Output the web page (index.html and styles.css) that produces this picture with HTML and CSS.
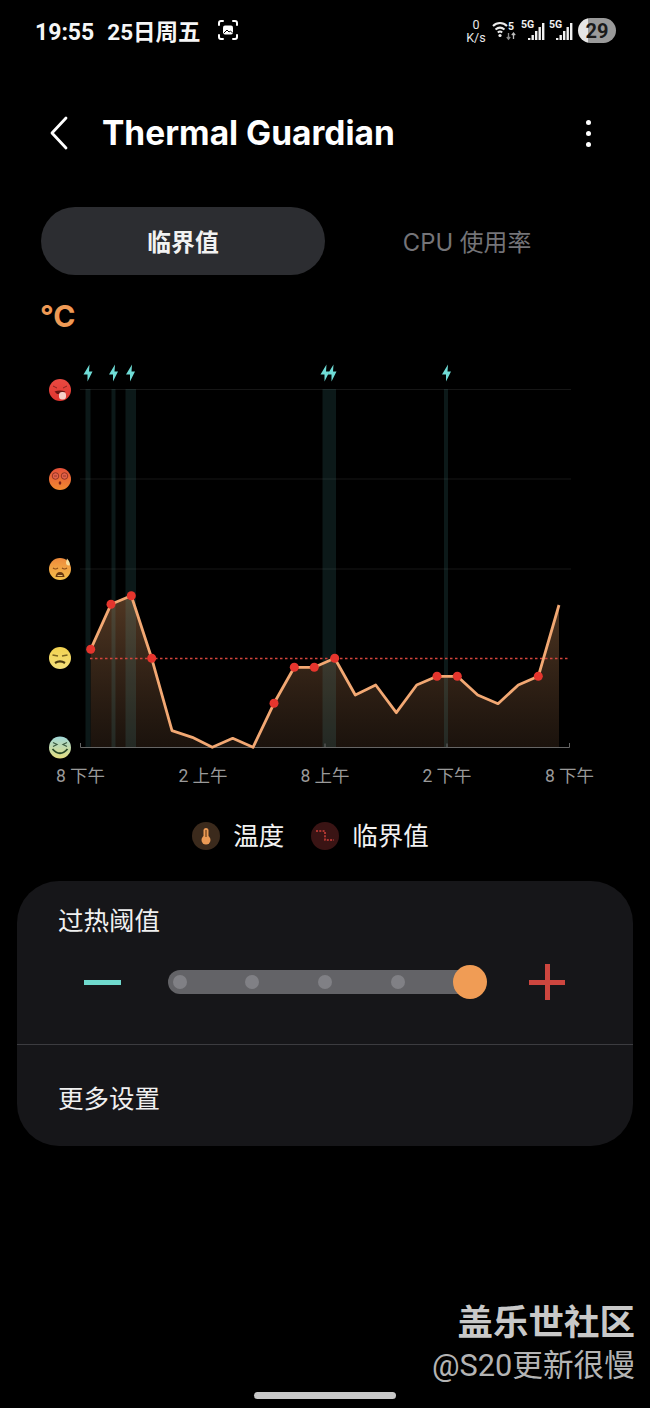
FILE: index.html
```html
<!DOCTYPE html>
<html lang="zh">
<head>
<meta charset="utf-8">
<title>Thermal Guardian</title>
<link rel="stylesheet" href="styles.css">
</head>
<body>
<div class="screen">
  <div class="status">
    <div class="status-left">
      <span class="clock">19:55</span>
      <span class="date">25日周五</span>
      <svg class="shot" viewBox="0 0 22 22" width="22" height="22" fill="none" stroke="#fff" stroke-width="2" stroke-linecap="round" stroke-linejoin="round">
        <path d="M2 6V4Q2 2 4 2H6M16 2H18Q20 2 20 4V6M2 16V18Q2 20 4 20H6M16 20H18Q20 20 20 18V16"/>
        <rect x="6" y="6.500" width="10" height="9" rx="2" fill="#fff" stroke="none"/>
        <path d="M7 14l3-3 2 2 1.500-1 2 2" stroke="#000" stroke-width="1"/>
      </svg>
    </div>
    <div class="status-right">
      <div class="speed"><span>0</span><span>K/s</span></div>
      <svg class="wifi" viewBox="0 0 25 24" width="25" height="24" fill="none" stroke="#ececec" stroke-width="2">
        <path d="M1 7C5 3 11 3 15 7M3.500 10.500C6.500 8 9.500 8 12.500 10.500M5.800 13.500C7 12.500 9 12.500 10.200 13.500"/>
        <circle cx="8" cy="16.500" r="1.600" fill="#ececec" stroke="none"/>
        <text x="16" y="11" class="tiny">5</text>
        <path d="M16.500 14v6M14.800 18l1.700 2.200 1.700-2.200" stroke="#8a8a8a" stroke-width="1.300"/>
        <path d="M21.500 20v-6M19.800 16.200l1.700-2.200 1.700 2.200" stroke="#bdbdbd" stroke-width="1.300"/>
      </svg>
      <svg class="signal" viewBox="0 0 24 24" width="24" height="24">
        <text x="0" y="9" class="tiny">5G</text>
        <g fill="#f0f0f0">
          <rect x="7" y="19" width="2.400" height="2"/><rect x="10.500" y="16" width="2.400" height="5"/><rect x="14" y="12" width="2.400" height="9"/><rect x="17.500" y="8" width="2.400" height="13"/><rect x="21" y="4" width="2.400" height="17"/>
        </g>
      </svg>
      <svg class="signal" viewBox="0 0 24 24" width="24" height="24">
        <text x="0" y="9" class="tiny">5G</text>
        <g fill="#f0f0f0">
          <rect x="7" y="19" width="2.400" height="2"/><rect x="10.500" y="16" width="2.400" height="5"/><rect x="14" y="12" width="2.400" height="9"/><rect x="17.500" y="8" width="2.400" height="13"/><rect x="21" y="4" width="2.400" height="17"/>
        </g>
      </svg>
      <div class="battery"><span>29</span></div>
    </div>
  </div>

  <header class="appbar">
    <svg class="back" viewBox="0 0 20 34" width="20" height="34" fill="none" stroke="#fff" stroke-width="2.800" stroke-linecap="round" stroke-linejoin="round"><path d="M17 2L3 17L17 32"/></svg>
    <h1 class="title">Thermal Guardian</h1>
    <div class="kebab"><i></i><i></i><i></i></div>
  </header>

  <nav class="tabs">
    <div class="tab tab-active">临界值</div>
    <div class="tab">CPU 使用率</div>
  </nav>

  <div class="unit">°C</div>

  <svg class="chart" viewBox="0 355 650 440" width="650" height="440">
    <defs>
      <linearGradient id="area" x1="0" y1="0" x2="0" y2="1">
        <stop offset="0" stop-color="#7d5535" stop-opacity=".65"/>
        <stop offset="1" stop-color="#5a3e2a" stop-opacity=".3"/>
      </linearGradient>
      <linearGradient id="e1" x1="0" y1="0" x2="0" y2="1"><stop offset="0" stop-color="#e94a42"/><stop offset="1" stop-color="#e0352f"/></linearGradient>
      <linearGradient id="e2" x1="0" y1="0" x2="0" y2="1"><stop offset="0" stop-color="#e5503a"/><stop offset="1" stop-color="#f28a30"/></linearGradient>
      <linearGradient id="e3" x1="0" y1="0" x2="0" y2="1"><stop offset="0" stop-color="#ee8a3c"/><stop offset="1" stop-color="#f5c04a"/></linearGradient>
      <linearGradient id="e4" x1="0" y1="0" x2="0" y2="1"><stop offset="0" stop-color="#f2d24f"/><stop offset="1" stop-color="#f3e07c"/></linearGradient>
      <linearGradient id="e5" x1="0" y1="0" x2="0" y2="1"><stop offset="0" stop-color="#a0d8d8"/><stop offset="1" stop-color="#e4de80"/></linearGradient>
      <path id="bolt" d="M1.500 -8.500L-4.500 1.500H-.5V8.500L4.500 -1.500H1Z" fill="#6fdcd6"/>
    </defs>

    <g class="grid">
      <path d="M80 389.500H571M80 479H571M80 569H571"/>
    </g>

    <path class="area" d="M90.700 649.300L111 604.300L131.300 595.700L151.700 658.300L172 730.700L192.300 737.300L212.300 747.300L232.700 738.300L253 747.300L274 703.300L294.300 667.300L314.300 667.300L334.700 658.300L355.300 695L375.700 685L396.300 712.700L416.700 685L437 676.300L457.300 676.300L477.700 695L498 703.700L518.300 685L538.300 676.300L559 605V747.500H90.700Z"/>

    <g class="bands">
      <rect x="85.500" y="389" width="5" height="358"/>
      <rect x="111.500" y="389" width="4" height="358"/>
      <rect x="125.500" y="389" width="10.500" height="358"/>
      <rect x="322.500" y="389" width="13.500" height="358"/>
      <rect x="444" y="389" width="4" height="358"/>
    </g>

    <path class="limit" d="M90 658.500H570"/>
    <path class="axis" d="M80.500 743V747.500H569.500V743M325 743.500V747.500M447 743.500V747.500"/>
    <path class="line" d="M90.700 649.300L111 604.300L131.300 595.700L151.700 658.300L172 730.700L192.300 737.300L212.300 747.300L232.700 738.300L253 747.300L274 703.300L294.300 667.300L314.300 667.300L334.700 658.300L355.300 695L375.700 685L396.300 712.700L416.700 685L437 676.300L457.300 676.300L477.700 695L498 703.700L518.300 685L538.300 676.300L559 605"/>
    <g class="dots">
      <circle cx="90.700" cy="649.300" r="4.500"/><circle cx="111" cy="604.300" r="4.500"/><circle cx="131.300" cy="595.700" r="4.500"/><circle cx="151.700" cy="658.300" r="4.500"/><circle cx="274" cy="703.300" r="4.500"/><circle cx="294.300" cy="667.300" r="4.500"/><circle cx="314.300" cy="667.300" r="4.500"/><circle cx="334.700" cy="658.300" r="4.500"/><circle cx="437" cy="676.300" r="4.500"/><circle cx="457.300" cy="676.300" r="4.500"/><circle cx="538.300" cy="676.300" r="4.500"/>
    </g>

    <use href="#bolt" x="88" y="373"/><use href="#bolt" x="113.500" y="373"/><use href="#bolt" x="130.500" y="373"/><use href="#bolt" x="325" y="373"/><use href="#bolt" x="332" y="373"/><use href="#bolt" x="446.500" y="373"/>

    <!-- face: tongue out -->
    <g transform="translate(60 390)">
      <circle r="11" fill="url(#e1)"/>
      <path d="M-7 -4l4 2M7 -4l-4 2" stroke="#8a2420" stroke-width="1" fill="none"/>
      <path d="M-5.500 1.500Q0 -.5 5.500 1.500L3 4H-3Z" fill="#6a1412"/>
      <rect x="-1" y="2" width="7" height="7.500" rx="3" fill="#f6cfc8"/>
    </g>
    <!-- face: dizzy -->
    <g transform="translate(60 479)">
      <circle r="11" fill="url(#e2)"/>
      <circle cx="-4.500" cy="-3" r="3.300" fill="#e2604a" stroke="#8a3020" stroke-width=".9"/>
      <circle cx="4.500" cy="-3" r="3.300" fill="#e2604a" stroke="#8a3020" stroke-width=".9"/>
      <path d="M-6 -3H-3M3 -3H6" stroke="#8a3020" stroke-width=".8"/>
      <ellipse cx="0" cy="4" rx="1.300" ry="1.700" fill="#7a2018"/>
    </g>
    <!-- face: sweating -->
    <g transform="translate(60 569)">
      <circle r="11" fill="url(#e3)"/>
      <path d="M-7 -1Q-4.500 1 -2 -1M2 -1Q4.500 1 7 -1" stroke="#8a4a18" stroke-width="1.100" fill="none"/>
      <path d="M-4.500 8Q-4 3 0 3Q4 3 4.500 8Z" fill="#6a3a10"/>
      <path d="M-2.500 6.500H2.500" stroke="#e8c070" stroke-width="1"/>
      <path d="M7 -10.500Q11 -6 9.500 -3.500Q6 -3 6 -6.500Z" fill="#f7e0a0"/>
    </g>
    <!-- face: displeased -->
    <g transform="translate(60 658)">
      <circle r="11" fill="url(#e4)"/>
      <path d="M-7.500 -3L-2 -2M7.500 -3L2 -2" stroke="#7a6420" stroke-width="1.300" fill="none"/>
      <path d="M-5 5Q0 1.800 5 5" stroke="#4a3a10" stroke-width="2.200" fill="none"/>
    </g>
    <!-- face: cool -->
    <g transform="translate(60 747.500)">
      <circle r="11" fill="url(#e5)"/>
      <path d="M-7 -5L-3 -3L-7 -1M7 -5L3 -3L7 -1" stroke="#3a5a40" stroke-width="1.200" fill="none"/>
      <path d="M-7.500 1.500Q0 10 7.500 1.500" stroke="#2a4a28" stroke-width="1.800" fill="none"/>
    </g>

    <g class="ticks">
      <text x="80.500" y="782">8 下午</text>
      <text x="203" y="782">2 上午</text>
      <text x="325" y="782">8 上午</text>
      <text x="447" y="782">2 下午</text>
      <text x="569.500" y="782">8 下午</text>
    </g>
  </svg>

  <div class="legend">
    <div class="legend-item">
      <svg class="legend-icon" viewBox="0 0 28 28" width="28" height="28">
        <circle cx="14" cy="14" r="14" fill="#3b2a1c"/>
        <rect x="11.500" y="6" width="5" height="12" rx="2.500" fill="#eb9a55"/>
        <circle cx="14" cy="18" r="4.500" fill="#eb9a55"/>
        <rect x="13.300" y="8" width="1.400" height="7" fill="#7a4a22"/>
      </svg>
      <span>温度</span>
    </div>
    <div class="legend-item">
      <svg class="legend-icon" viewBox="0 0 28 28" width="28" height="28">
        <circle cx="14" cy="14" r="14" fill="#3a1414"/>
        <path d="M5 9H14V18H23" fill="none" stroke="#d2403a" stroke-width="1.500" stroke-dasharray="2 1.300"/>
      </svg>
      <span>临界值</span>
    </div>
  </div>

  <section class="card">
    <div class="card-top">
      <div class="card-label">过热阈值</div>
      <div class="slider-row">
        <span class="minus"></span>
        <div class="slider">
          <i class="stop"></i><i class="stop"></i><i class="stop"></i><i class="stop"></i><i class="thumb"></i>
        </div>
        <span class="plus"></span>
      </div>
    </div>
    <div class="card-label card-more">更多设置</div>
  </section>

  <div class="watermark">
    <div class="wm-main">盖乐世社区</div>
    <div class="wm-sub">@S20更新很慢</div>
  </div>
  <div class="home"></div>
</div>
</body>
</html>
```

FILE: styles.css
```css
* { box-sizing: border-box; }
html, body { margin: 0; padding: 0; background: #000; }
body { font-family: Roboto, "Noto Sans CJK SC", sans-serif; color: #fff; }
.screen { position: relative; width: 650px; height: 1408px; overflow: hidden; background: #000; }

.status { height: 62px; padding: 0 34px 0 35px; display: flex; align-items: center; justify-content: space-between; }
.status-left { display: flex; align-items: baseline; font-size: 23px; font-weight: 700; color: #f6f6f6; margin-bottom: 3px; }
.clock { margin-right: 13px; }
.date { margin-right: 16px; font-size: 22.500px; }
.shot { display: block; align-self: center; }
.status-right { display: flex; align-items: center; margin-bottom: 1px; }
.speed { display: flex; flex-direction: column; align-items: center; font-size: 12.500px; line-height: 13px; color: #e8e8e8; margin-right: 6px; width: 20px; }
.signal { display: block; margin-left: 4px; }
.wifi { display: block; }
.tiny { font-size: 10.500px; font-weight: 700; fill: #f0f0f0; stroke: none; }
.battery { margin-left: 5px; width: 38px; height: 25px; border-radius: 13px; background: linear-gradient(90deg, #e6e6e6 0 27%, #9a9a9a 27%); display: flex; align-items: center; justify-content: center; font-size: 20px; font-weight: 700; color: #1a1a1a; }

.appbar { height: 80px; margin-top: 31px; padding-left: 49px; display: flex; align-items: center; }
.back { display: block; }
.title { margin: 1px 0 0 33px; font-family: Inter, Roboto, sans-serif; font-size: 33.500px; font-weight: 700; letter-spacing: 0; line-height: 1; }
.kebab { margin-left: auto; margin-right: 59px; display: flex; flex-direction: column; gap: 6px; }
.kebab i { display: block; width: 5px; height: 5px; border-radius: 50%; background: #fff; }

.tabs { margin: 34px 41px 0; height: 68px; display: flex; }
.tab { flex: 1; display: flex; align-items: center; justify-content: center; padding-bottom: 2px; font-family: Inter, "Noto Sans CJK SC", sans-serif; font-size: 23.800px; color: #747478; border-radius: 34px; }
.tab-active { background: #2c2d31; color: #f2f2f2; font-weight: 700; }

.unit { margin: 23px 0 0 40px; height: 36px; line-height: 36px; font-family: Inter, Roboto, sans-serif; font-size: 30px; font-weight: 700; color: #ef9a55; }

.chart { display: block; margin-top: 21px; }
.bands rect { fill: #5fc4c0; opacity: .13; }
.grid path { stroke: #161616; stroke-width: 1; fill: none; }
.area { fill: url(#area); }
.limit { stroke: #d2453c; stroke-width: 1.300; stroke-dasharray: 2.500 2.500; fill: none; }
.axis { stroke: #666; stroke-width: 1; fill: none; }
.line { stroke: #f2a873; stroke-width: 2.800; fill: none; stroke-linejoin: round; }
.dots circle { fill: #e5352d; }
.ticks text { fill: #9a9a9a; font-size: 17.500px; text-anchor: middle; }

.legend { height: 46px; margin-top: 18px; display: flex; justify-content: center; align-items: center; gap: 27px; font-size: 25.500px; color: #f2f2f2; padding-right: 29px; }
.legend-item { display: flex; align-items: center; gap: 13px; }
.legend-item span { margin-bottom: 5px; }
.legend-icon { display: block; }

.card { margin: 22px 17px 0; height: 265px; border-radius: 42px; background: #161619; }
.card-top { height: 164px; padding-top: 23px; border-bottom: 1px solid #3c3c40; }
.card-label { padding-left: 41px; font-size: 25.500px; line-height: 34px; color: #f0f0f0; }
.card-more { height: 101px; padding-top: 6px; display: flex; align-items: center; }

.slider-row { display: flex; align-items: center; margin-top: 19px; padding-left: 67px; height: 50px; }
.minus { display: block; width: 37px; height: 5px; background: #6fd9cd; }
.slider { width: 312px; height: 24px; margin-left: 47px; border-radius: 12px; background: #636367; position: relative; display: flex; align-items: center; padding-left: 4.500px; gap: 58.700px; }
.stop { display: block; width: 14px; height: 14px; border-radius: 50%; background: #808085; flex: none; }
.thumb { position: absolute; right: -7px; top: -5px; width: 34px; height: 34px; border-radius: 50%; background: #f09c55; }
.plus { display: block; width: 36px; height: 36px; margin-left: 49px; background: linear-gradient(#cd463f, #cd463f) center / 100% 5px no-repeat, linear-gradient(#cd463f, #cd463f) center / 5px 100% no-repeat; }

.watermark { position: absolute; right: 15px; top: 1297px; text-align: right; color: #c8c8c8; font-family: "Noto Sans CJK SC", sans-serif; }
.wm-main { font-size: 35.500px; font-weight: 700; line-height: 46px; }
.wm-sub { font-size: 30.700px; line-height: 46px; font-family: Roboto, "Noto Sans CJK SC", sans-serif; color: #b4b4b4; }

.home { position: absolute; left: 254px; top: 1392px; width: 142px; height: 7px; border-radius: 4px; background: #c8c8c8; }
```
